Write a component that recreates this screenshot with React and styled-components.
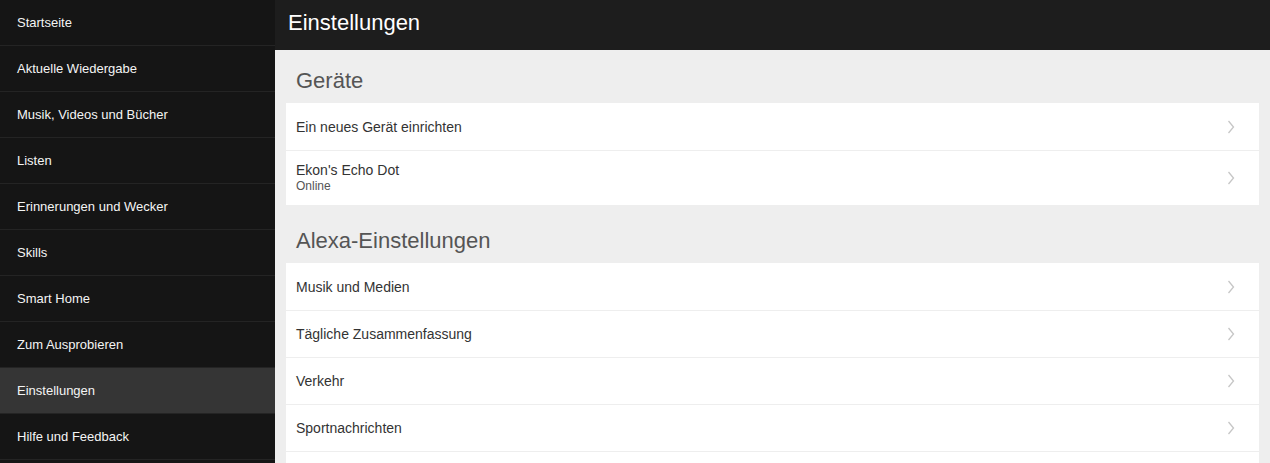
import React from 'react'
import styled, { createGlobalStyle } from 'styled-components'

const GlobalStyle = createGlobalStyle`
  html, body {
    margin: 0;
    padding: 0;
    height: 100%;
    overflow: hidden;
    background: #eeeeee;
    font-family: "Liberation Sans", Arial, sans-serif;
  }
`

const Layout = styled.div`
  display: flex;
  width: 1270px;
  height: 463px;
  overflow: hidden;
`

const Sidebar = styled.nav`
  width: 275px;
  flex-shrink: 0;
  background: #151515;
  display: flex;
  flex-direction: column;
`

const NavItem = styled.a`
  display: flex;
  align-items: center;
  height: 45px;
  padding-left: 17px;
  border-bottom: 1px solid #242424;
  background: ${props => (props.active ? '#353535' : 'transparent')};
  color: #f4f4f4;
  font-size: 13px;
  text-decoration: none;
  flex-shrink: 0;
`

const Main = styled.main`
  flex: 1;
  display: flex;
  flex-direction: column;
  background: #eeeeee;
  min-width: 0;
`

const Header = styled.header`
  height: 50px;
  flex-shrink: 0;
  background: #1d1d1d;
  display: flex;
  align-items: center;
  padding-left: 13px;
  padding-bottom: 5px;
  box-sizing: border-box;
  color: #ffffff;
  font-size: 22px;
`

const Content = styled.div`
  padding: 0 11px;
`

const SectionTitle = styled.h2`
  margin: 0;
  padding: 17px 10px 8px;
  line-height: 28px;
  font-size: 22px;
  font-weight: normal;
  color: #555555;
`

const Card = styled.div`
  background: #ffffff;
  margin-bottom: 5px;
`

const Row = styled.div`
  display: flex;
  align-items: center;
  justify-content: space-between;
  min-height: 46px;
  padding: ${props => (props.sub ? '11px 0 12px 10px' : '0 0 0 10px')};
  box-sizing: ${props => (props.sub ? 'border-box' : 'content-box')};
  border-bottom: 1px solid #eeeeee;
  &:first-child {
    min-height: 47px;
  }
  &:last-child {
    border-bottom: none;
  }
`

const RowText = styled.div`
  display: flex;
  flex-direction: column;
`

const Label = styled.span`
  font-size: 14px;
  line-height: 16px;
  color: #333333;
`

const Sub = styled.span`
  font-size: 12px;
  line-height: 14px;
  margin-top: 1px;
  color: #555555;
`

const Chevron = styled.svg`
  width: 8px;
  height: 14px;
  margin-right: 24px;
  fill: none;
  stroke: #c6c6c6;
  stroke-width: 1.3px;
`

const navItems = [
  'Startseite',
  'Aktuelle Wiedergabe',
  'Musik, Videos und Bücher',
  'Listen',
  'Erinnerungen und Wecker',
  'Skills',
  'Smart Home',
  'Zum Ausprobieren',
  'Einstellungen',
  'Hilfe und Feedback',
]

const sections = [
  {
    title: 'Geräte',
    rows: [
      { label: 'Ein neues Gerät einrichten' },
      { label: "Ekon's Echo Dot", sub: 'Online' },
    ],
  },
  {
    title: 'Alexa-Einstellungen',
    rows: [
      { label: 'Musik und Medien' },
      { label: 'Tägliche Zusammenfassung' },
      { label: 'Verkehr' },
      { label: 'Sportnachrichten' },
      { label: '' },
    ],
  },
]

const Arrow = () => (
  <Chevron viewBox="0 0 8 14">
    <polyline points="1.5 1 6.5 7 1.5 13" />
  </Chevron>
)

export default function App() {
  return (
    <>
      <GlobalStyle />
      <Layout>
        <Sidebar>
          {navItems.map(item => (
            <NavItem key={item} active={item === 'Einstellungen'}>
              {item}
            </NavItem>
          ))}
        </Sidebar>
        <Main>
          <Header>Einstellungen</Header>
          <Content>
            {sections.map(section => (
              <div key={section.title}>
                <SectionTitle>{section.title}</SectionTitle>
                <Card>
                  {section.rows.map((row, i) => (
                    <Row key={i} sub={row.sub}>
                      <RowText>
                        <Label>{row.label}</Label>
                        {row.sub && <Sub>{row.sub}</Sub>}
                      </RowText>
                      <Arrow />
                    </Row>
                  ))}
                </Card>
              </div>
            ))}
          </Content>
        </Main>
      </Layout>
    </>
  )
}
